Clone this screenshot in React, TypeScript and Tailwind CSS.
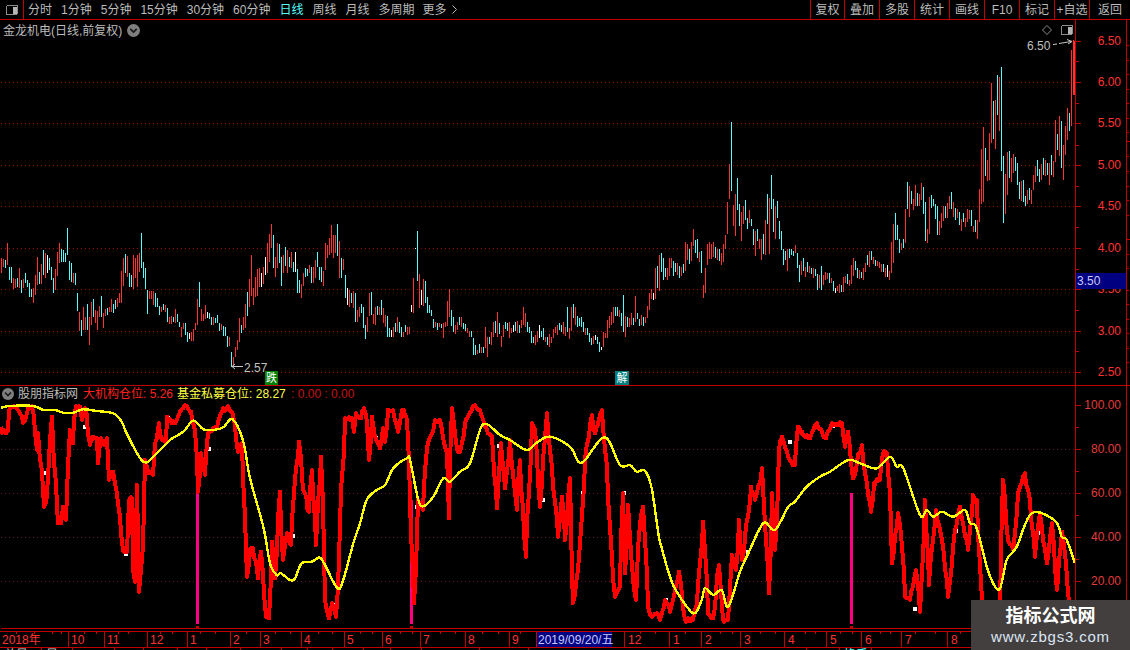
import React from "react";

const RED = "#ff3232";
const CYAN = "#54fcfc";
const LINE = "#c00000";

// candle traces: "top-bottom colour" in zoomed (x3) pixels
function sec(x0: number, y0: number, s: string) {
  return s
    .trim()
    .split(/\s+/)
    .map((t, i) => {
      const m = t.match(/(\d+)-(\d+)([rcw])/)!;
      return { x: x0 + i * 2, t: Math.round(y0 + +m[1] / 3), b: Math.round(y0 + +m[2] / 3), c: m[3] };
    });
}

const bars = [
  ...sec(1, 210, `143-188r 148-172r 150-175c 100-165r 172-210c 172-218c 205-238r 208-235r 205-232c 175-235r 210-248c 208-235r 190-220c 210-230c 220-262c 238-262c 235-278r 195-255r 140-225r 185-222c 162-222r 120-195c 130-205r 135-190w 145-180c 170-210c 205-248c 178-240r 125-198r 100-158r 118-155c 120-155c 130-155c 55-135c 153-210c 160-215c 190-220r 190-225c 250-303c 305-362r 330-378c 292-360r 320-360r 282-360c 320-405r 277-345r 268-320c 300-340r 303-360r 288-322r 258-320c 310-353r 296-318r 295-315c 290-305r 267-305r 283-310c 270-298c 265-290r 250-280r 183-278r 145-228r 132-190c 138-200r 190-232c 195-232c 135-238r 145-205r 135-232r 130-185r 70-175c 155-205c 175-237c 240-312c 243-267r 243-268r 243-285r 250-290c 265-290c 288-315c 290-305r 282-300c 285-305r 295-335c 320-342r 318-342r 322-336c 298-340r 312-336c 336-352c 350-380r 340-358r 340-375c 365-395c 368-388w 365-392r 358-392r 340-360r 268-345r 217-290c 298-332r 312-332r 285-328r 305-325w 308-328c 322-345c 322-345r 325-340c 315-340c 340-362c 342-360r 348-378c 352-378c 378-410c 382-408r 425-470c 440-470r 410-442r 390-420r 325-395r 345-368c 320-360r 282-355r 245-317c 207-290r 135-258r 235-285r 200-262r 178-258r 175-232r 190-232w 172-222r 140-195w 100-190r 72-155r`),
  ...sec(271, 210, `42-115r 75-175c 140-200r 100-175r 102-160c 140-228c 135-190r 112-168c 120-188r 140-172c 125-175r 155-185c 127-187w 178-248c 210-248c 222-264r 190-228r 175-200c 178-198c 165-190r 172-220c 170-218r 150-205r 125-170c 172-210c 170-215c 182-228r 100-180r 105-145r 85-135r 45-130r 75-145r 75-130r 42-138c 92-205r 145-205c 148-180r 195-265c 235-285w 240-290r 250-280c 242-295r 250-335c 300-335r 290-320r 282-308c 290-355c 345-388c 320-365r 250-318r 245-315c 312-342r 290-345r 288-315c 292-315r 270-315c 295-340r 315-350r 318-380c 355-380c 360-380w 350-380r 340-365c 320-365r 335-368c 352-380c 365-382r 345-365c 350-375r 352-372r 285-305w 205-308r 113-118w 63-212c 192-293r 240-285w 208-288r 213-278c 262-308c 285-310c 300-318c 328-355c 335-352r 338-360c 340-352r 342-355c 340-384r 335-350r 273-348r 238-322r 300-348c 322-365c 345-372r 335-360r 322-345c 322-352r 340-358c 343-362c 355-368r 362-382r 364-380c 385-435c 405-435c 420-432r 402-428c 412-430r 410-428c 350-415r 380-440r 382-402c 365-405r 335-380r 332-368c 305-380r 340-372c 378-412r 345-380r 335-358c 338-362c 335-385r 355-368r 345-365w 335-362c 333-368r 345-368c 330-355r 292-345r 308-352r 335-365c 350-368c 362-398c 382-400c 375-405r 362-395r 345-385w 362-382c 355-390c 380-395r 382-405c 372-410r 382-400r 358-385r 350-370r 345-375r 340-360c 345-365c 335-372r 350-378r 292-365c 355-388r 292-362r 282-325c 292-345r 318-352c 325-348c 320-350c 335-365c 355-375r 355-375c 370-395c 385-405c 378-402r 375-390w 380-402c 395-425c 410-420w 365-410r 368-385r 330-385r 318-355r 305-345r 292-340r 292-318c 292-318c 300-322r 310-348c 255-365c 318-380r 322-350c 325-352r 310-345r 325-345c 258-335r 310-328c 328-348c 315-345r 322-348c 322-340r 288-325r 250-300r`),
  ...sec(651, 60, `688-718r 700-720w 625-718r 618-685c 585-692r 580-635c 595-660c 625-650c 625-660r 595-648r 595-625r 602-648c 608-635c 610-645r 618-655c 622-648r 612-638c 546-632r 552-600r 567-612c 546-602r 507-558r 540-580c 537-595c 576-606r 572-640c 675-715r 624-698r 552-615r 546-598r 552-598r 546-590r 562-595c 566-600r 568-604c 578-615r 552-605r 525-568r 426-522r 312-418r 186-393c 435-498r 402-528r 354-450c 432-498c 456-543r 438-492r 420-480c 474-507c 450-490r 477-498c 507-555c 513-588r 507-543c 537-568r 537-600r 522-582c 480-585r 402-492c 414-582r 345-447c 417-516c 438-537r 423-474c 483-537c 513-570c 567-615c 573-600c 567-633r 567-594c 567-585c 573-588c 555-580r 580-624c 615-666c 603-645r 594-633c 620-651r 606-636c 618-640r 624-642c 624-654r 628-648c 642-690c 645-684r 618-690c 645-675r 636-660r 640-657r 640-669c 654-670r 663-693c 684-698w 678-692r 672-699r 675-696c 650-696r 648-670r 642-672c 660-678r 615-672r 595-648r 603-630c 624-654c 630-657r 636-654c 624-660r 609-636r 585-615c 573-621r 573-600c 590-612r 600-618c 603-618r 606-624r 612-636r 612-636c 624-651r 615-651w 632-660r 546-640r 492-609r 459-540c 495-540c 537-579c 549-570r 537-564c 447-549r 366-447c 378-471r 393-432c 417-450r 375-438r 399-438c 402-438r 369-420r 381-462c 426-543c 507-549r 411-522r 405-444c 417-438c 432-477c 438-525c 483-525r 459-504r 438-483r 438-474c 429-474r 408-447r 396-447c 426-471r 444-480c 447-474r 456-495c 477-513r 459-486c 474-501r 447-486r 450-477r 450-498c 498-516r 480-516c 480-537r 387-486r 267-432r 201-426r 264-348c 300-363r 219-360r 69-249r 123-237c 120-267r 45-165c 50-213r`),
  ...sec(1001, 30, `112-423c 378-578c 432-552r 366-495r 363-444c 384-456r 372-429r 381-423c 400-465c 456-507c 453-513r 450-516c 498-528c 480-522r 474-510c 480-522r 435-480r 408-456r 390-438c 417-456c 402-450r 384-435c 390-438r 399-435c 399-465r 375-435c 393-441r 270-396r 312-360c 258-378r 273-414c 345-450r 288-375r 234-330r 250-303c 60-288r 30-192r`),
];

function barPath(c: string) {
  return bars
    .filter((b) => b.c === c)
    .map((b) => `M${b.x + 0.5} ${b.t}V${b.b}`)
    .join("");
}

function pts(x0: number, y0: number, s: string) {
  return s
    .trim()
    .split(/\s+/)
    .map((p) => {
      const [a, b] = p.split(",").map(Number);
      return [x0 + a / 3, y0 + b / 3] as [number, number];
    });
}

const redRaw = [
  ...pts(0, 400, `3,80 6,98 12,90 18,100 24,92 27,30 33,22 42,18 50,25 60,40 70,68 78,50 85,25 95,18 102,50 105,95 110,150 115,100 120,180 127,215 132,320 140,285 147,180 155,50 160,130 167,250 175,370 182,370 190,320 197,360 205,200 210,90 218,130 222,60 228,18 240,20 245,60 255,25 262,60 270,135 280,110 290,115 295,190 302,115 312,135 320,115 326,240 340,215 350,280 360,350 368,450 380,455 388,300 395,295 400,510 405,545 412,255 418,575 428,440 435,180 448,220 458,225 466,130 478,70 485,120 497,125 500,50 515,70 525,70 540,35 560,18 572,35 585,90 595,275 603,160 615,225 625,100 640,85 650,85 665,35 685,18 700,45 715,155 727,130 735,350 742,530 750,450 758,445 775,535 783,455 797,650 808,655`),
  ...pts(270, 400, `6,425 15,535 30,275 40,480 50,400 62,435 72,280 88,125 100,270 118,335 125,210 137,435 153,170 165,600 178,655 187,610 197,650 210,380 225,55 245,55 252,95 258,40 272,55 283,25 292,70 298,180 307,50 315,110 330,145 340,85 345,125 355,30 368,30 385,95 395,30 412,60 420,300 433,610 445,300 458,330 470,145 495,60 510,60 530,160 537,355 547,25 560,145 570,155 585,70 610,18 630,30 645,80 665,110 672,215 682,325 692,130 705,265 720,120 740,330 750,180 767,470 785,70 795,90 810,320 830,40 835,90 850,260 865,410 875,290 885,420 900,235 907,520 910,610 925,510 945,185 965,45 975,100 995,30 1010,200 1025,470 1035,590 1050,560 1060,280 1065,520 1075,315 1085,500 1097,600 1110,375 1120,320 1133,620 1145,650 1160,640 1170,660`),
  ...pts(660, 400, `15,600 30,635 45,570 58,515 75,660 100,660 110,610 130,365 145,640 160,655 178,495 188,660 205,660 215,465 227,510 237,360 245,480 265,350 272,260 285,300 295,260 307,205 318,420 327,580 337,280 345,450 358,150 365,110 385,170 405,195 413,80 430,105 450,115 470,70 497,115 515,70 545,70 555,140 565,95 580,235 605,135 620,250 632,335 642,250 660,240 668,160 680,160 690,280 697,490 715,340 727,440 735,590 750,600 758,560 768,510 781,635 795,300 807,555 828,330 845,420 865,590 885,390 900,320 925,450 940,285 950,300 965,600 975,640 1000,660 1020,640 1030,240 1045,420 1060,450 1075,280 1095,220 1110,300 1125,470 1140,340 1160,490 1175,370 1190,570 1207,395 1225,580 1232,640`),
];

// the traced line has a fine tremble between its traced points
let seed = 12345;
function rnd() {
  seed = (seed * 1103515245 + 12345) & 0x7fffffff;
  return seed / 0x7fffffff;
}
function tremble(p: [number, number][]) {
  const out: string[] = [];
  for (let i = 0; i < p.length - 1; i++) {
    const [x1, y1] = p[i];
    const [x2, y2] = p[i + 1];
    const n = Math.max(1, Math.round((x2 - x1) / 1.5));
    for (let k = 0; k < n; k++) {
      const f = k / n;
      const j = k === 0 ? 0 : (rnd() - 0.5) * 5;
      out.push(`${Math.round(x1 + (x2 - x1) * f + (k === 0 ? 0 : (rnd() - 0.5)))},${(y1 + (y2 - y1) * f + j).toFixed(1)}`);
    }
  }
  const l = p[p.length - 1];
  out.push(`${l[0]},${l[1]}`);
  return out.join(" ");
}
const redLine = tremble(redRaw);

const yellowPts = [
  ...pts(0, 400, `3,23 30,18 100,18 130,30 165,30 190,38 220,38 250,28 290,33 340,40 365,65 380,100 430,185 470,160 510,120 550,95 580,62 610,88 640,90 670,82 698,58 730,125 750,235 790,380 810,490`),
  ...pts(270, 400, `20,525 33,520 60,540 75,535 95,490 125,485 135,480 155,478 200,562 218,545 250,430 270,370 290,300 320,270 345,255 370,205 410,175 420,180 445,300 462,318 490,290 520,235 540,245 570,215 600,190 630,90 650,72 690,105 720,120 770,150 800,128 840,110 900,140 925,185 945,180 1005,112 1050,195 1080,195 1100,215 1125,212 1145,265 1165,400`),
  ...pts(660, 400, `0,425 30,530 50,575 100,640 125,600 135,565 160,585 185,570 205,620 240,515 265,460 310,370 345,390 385,320 405,305 440,260 480,230 510,215 565,180 600,190 650,205 690,170 710,200 730,205 780,345 800,330 820,350 845,335 880,350 915,330 930,370 950,385 985,515 1018,568 1040,480 1070,440 1115,340 1185,362 1205,410 1220,420 1245,490`),
];

// a smooth curve through the traced points
function smooth(p: [number, number][]) {
  let d = `M${p[0][0].toFixed(1)} ${p[0][1].toFixed(1)}`;
  for (let i = 0; i < p.length - 1; i++) {
    const a = p[Math.max(0, i - 1)];
    const b = p[i];
    const c = p[i + 1];
    const e = p[Math.min(p.length - 1, i + 2)];
    const c1x = b[0] + (c[0] - a[0]) / 6;
    const c1y = b[1] + (c[1] - a[1]) / 6;
    const c2x = c[0] - (e[0] - b[0]) / 6;
    const c2y = c[1] - (e[1] - b[1]) / 6;
    d += `C${c1x.toFixed(1)} ${c1y.toFixed(1)} ${c2x.toFixed(1)} ${c2y.toFixed(1)} ${c[0].toFixed(1)} ${c[1].toFixed(1)}`;
  }
  return d;
}
const yellowLine = smooth(yellowPts);

const specks = [
  ...pts(0, 400, `502,50 252,78 130,215 625,145 375,458 748,452`),
  ...pts(270, 400, `315,110 65,405 187,612 437,317 565,140 685,135 817,297 937,275 1060,275 1185,598`),
  ...pts(660, 400, `15,598 140,610 262,452 388,122 515,75 640,265 885,390 1130,395 763,625`),
];

const priceLevels: [string, number][] = [
  ["6.50", 41],
  ["6.00", 82],
  ["5.50", 123],
  ["5.00", 165],
  ["4.50", 206],
  ["4.00", 248],
  ["3.50", 289],
  ["3.00", 331],
  ["2.50", 372],
];
const indLevels: [string, number][] = [
  ["100.00", 405],
  ["80.00", 449],
  ["60.00", 493],
  ["40.00", 537],
  ["20.00", 581],
];

const timeTicks = [16, 34, 52, 61, 84, 96, 118, 128, 160, 172, 200, 215, 246, 275, 290, 318, 332, 360, 372, 400, 412, 440, 455, 482, 498, 520, 640, 655, 685, 720, 732, 760, 775, 805, 815, 840, 852, 880, 890, 915, 935, 960];

const leftTabs = ["分时", "1分钟", "5分钟", "15分钟", "30分钟", "60分钟", "日线", "周线", "月线", "多周期"];
const rightTabs: [string, string][] = [
  ["复权", "w-[34px]"],
  ["叠加", "w-[35px]"],
  ["多股", "w-[35px]"],
  ["统计", "w-[35px]"],
  ["画线", "w-[35px]"],
  ["F10", "w-[35px]"],
  ["标记", "w-[35px]"],
  ["+自选", "w-[35px]"],
  ["返回", "w-[41px]"],
];
const timeCells: [string, string][] = [
  ["2018年", "w-[69px]"],
  ["10", "w-[36px]"],
  ["11", "w-[43px]"],
  ["12", "w-[40px]"],
  ["1", "w-[43px]"],
  ["2", "w-[30px]"],
  ["3", "w-[41px]"],
  ["4", "w-[43px]"],
  ["5", "w-[38px]"],
  ["6", "w-[38px]"],
  ["7", "w-[45px]"],
  ["8", "w-[44px]"],
  ["9", "w-[27px]"],
];
const timeCells2: [string, string][] = [
  ["", "w-[13px]"],
  ["12", "w-[45px]"],
  ["1", "w-[32px]"],
  ["2", "w-[39px]"],
  ["3", "w-[44px]"],
  ["4", "w-[42px]"],
  ["5", "w-[35px]"],
  ["6", "w-[40px]"],
  ["7", "w-[46px]"],
  ["8", "grow"],
];
const statusCells: [string, string][] = [
  ["总量", "w-[42px] text-[#d0d0d0]"],
  ["量", "w-[31px] text-[#d0d0d0]"],
  ["", "w-[42px]"],
  ["", "w-[29px]"],
  ["", "w-[34px]"],
  ["", "w-[29px]"],
  ["", "w-[34px]"],
  ["", "w-[41px]"],
  ["", "w-[26px]"],
  ["", "w-[25px]"],
  ["", "w-[31px]"],
  ["", "w-[27px]"],
  ["", "w-[31px]"],
  ["", "w-[58px]"],
  ["", "w-[49px]"],
  ["", "w-[278px]"],
  ["", "w-[33px]"],
  ["换手", "w-[32px] text-[#54fcfc]"],
];

function Chevron({ className }: { className: string }) {
  return (
    <svg viewBox="0 0 12 12" className={className}>
      <circle cx="6" cy="6" r="6" fill="#7f7f7f" />
      <path d="M3 4.5 L6 7.5 L9 4.5" fill="none" stroke="#1a1a1a" strokeWidth="1.6" />
    </svg>
  );
}

function PanelIcon({ className }: { className: string }) {
  return (
    <svg viewBox="0 0 12 10" className={className} shapeRendering="crispEdges">
      <rect x="0.5" y="0.5" width="11" height="9" rx="1.5" fill="none" stroke="#8c8c8c" />
      <rect x="7" y="1.5" width="3.5" height="7" fill="#b4b4b4" />
    </svg>
  );
}

export default function App() {
  return (
    <div className="relative flex h-[650px] w-[1130px] flex-col overflow-hidden bg-black font-['Liberation_Sans','Noto_Sans_CJK_SC',sans-serif] text-[12px] leading-none text-[#bcbcbc]">
      {/* toolbar */}
      <div className="flex h-[20px] items-stretch justify-between border-b border-[#c00000]">
        <div className="flex items-center">
          <div className="flex h-full w-[24px] items-center justify-center border-r border-[#c00000]">
            <PanelIcon className="h-[10px] w-[12px]" />
          </div>
          <div className="ml-[4px] flex items-center gap-[9px]">
            {leftTabs.map((t) => (
              <span key={t} className={t === "日线" ? "text-[#54fcfc]" : ""}>
                {t}
              </span>
            ))}
            <span className="ml-[-1px] flex items-center gap-[5px]">
              更多
              <svg viewBox="0 0 5 9" className="h-[9px] w-[5px]">
                <path d="M0.5 0.5 L4.5 4.5 L0.5 8.5" fill="none" stroke="#bcbcbc" />
              </svg>
            </span>
          </div>
        </div>
        <div className="flex">
          {rightTabs.map(([t, w]) => (
            <div key={t} className={`flex items-center justify-center border-l border-[#c00000] ${w}`}>
              {t}
            </div>
          ))}
        </div>
      </div>

      {/* price panel */}
      <div className="relative h-[366px] border-b border-[#c00000]">
        <svg viewBox="0 20 1130 365" className="block h-[365px] w-[1130px]" fontSize="12">
          <g shapeRendering="crispEdges">
            {priceLevels.slice(1).map(([l, y]) => (
              <line key={l} x1="1" x2="1075" y1={y + 0.5} y2={y + 0.5} stroke="#9a0000" strokeDasharray="1 3" />
            ))}
            <path d={barPath("r")} stroke={RED} fill="none" />
            <path d={barPath("c")} stroke={CYAN} fill="none" />
            <path d={barPath("w")} stroke="#ffffff" fill="none" />
            <rect x="1073" y="41" width="2" height="54" fill={RED} />
            <rect x="1075" y="20" width="1" height="365" fill={LINE} />
            <rect x="1126" y="20" width="1" height="365" fill={LINE} />
            {priceLevels.map(([l, y]) => (
              <rect key={l} x="1076" y={y} width="5" height="1" fill={LINE} />
            ))}
            {[61, 103, 145, 186, 227, 269, 310, 351].map((y) => (
              <rect key={y} x="1076" y={y} width="3" height="1" fill={LINE} />
            ))}
            {[45, 60, 74, 89, 103, 118, 132, 141, 156, 171, 186, 200, 215, 239, 254, 268, 290, 304, 319, 333, 348, 362].map((y) => (
              <rect key={y} x="1127" y={y} width={y === 141 || y === 239 ? 3 : 2} height="1" fill={LINE} />
            ))}
          </g>
          {priceLevels.map(([l, y]) => (
            <text key={l} x="1121" y={y + 4} textAnchor="end" fill={RED}>
              {l}
            </text>
          ))}
          <text x="1027" y="50" fill="#c0c0c0">6.50</text>
          <path d="M1053 44.5 L1057 44 M1059 43.5 L1071 41.5 M1067 39.5 L1072 41.5 L1068 44" stroke="#c8c8c8" fill="none" />
          <text x="244" y="372" fill="#c0c0c0">2.57</text>
          <path d="M232 366.5 H243 M232 366.5 L235 364 M232 366.5 L235 369" stroke="#c8c8c8" fill="none" />
        </svg>

        {/* overlays on the chart */}
        <div className="absolute left-[3px] top-[4px] flex items-center gap-[5px]">
          <span>金龙机电(日线,前复权)</span>
          <Chevron className="h-[13px] w-[13px]" />
        </div>
        <svg viewBox="0 0 10 10" className="absolute left-[1042px] top-[5px] h-[10px] w-[10px]">
          <path d="M5 0.5 L9.5 5 L5 9.5 L0.5 5 Z" fill="none" stroke="#8c8c8c" />
        </svg>
        <PanelIcon className="absolute left-[1061px] top-[5px] h-[10px] w-[12px]" />
        <div className="absolute left-[1076px] top-[253px] flex h-[16px] w-[50px] items-center bg-[#000080] pl-[1px] text-[#c8c8ff]">
          3.50
        </div>
        <div className="absolute left-[265px] top-[351px] flex h-[14px] w-[13px] items-center justify-center bg-[#008000] text-[11px] text-white">
          跌
        </div>
        <div className="absolute left-[615px] top-[351px] flex h-[14px] w-[14px] items-center justify-center bg-[#008080] text-[11px] text-white">
          解
        </div>
      </div>

      {/* indicator panel */}
      <div className="relative h-[245px]">
        <svg viewBox="0 386 1130 245" className="block h-[245px] w-[1130px]" fontSize="12">
          <g shapeRendering="crispEdges">
            {indLevels.slice(1).map(([l, y]) => (
              <line key={l} x1="1" x2="1075" y1={y + 0.5} y2={y + 0.5} stroke="#6a1a1a" strokeDasharray="1 3" />
            ))}
            <rect x="196" y="493" width="3" height="131" fill="#ff0080" />
            <rect x="410" y="500" width="3" height="124" fill="#ff0080" />
            <rect x="850" y="493" width="3" height="131" fill="#ff0080" />
            {specks.map(([x, y], i) => (
              <rect key={i} x={Math.round(x) - 1} y={Math.round(y) - 1} width="4" height="4" fill="#ffffff" />
            ))}
            <polyline points={redLine} fill="none" stroke="#ff0000" strokeWidth="4" strokeLinejoin="round" />
            <path d={yellowLine} fill="none" stroke="#ffff00" strokeWidth="2.4" strokeLinejoin="round" />
            <path d="M196 626h3v2h-3zM410 626h3v2h-3zM850 626h3v2h-3z" fill={LINE} />
            <rect x="1" y="628" width="1075" height="1" fill={LINE} />
            <rect x="1075" y="386" width="1" height="245" fill={LINE} />
            <rect x="1126" y="386" width="1" height="245" fill={LINE} />
            {indLevels.map(([l, y]) => (
              <rect key={l} x="1076" y={y} width="5" height="1" fill={LINE} />
            ))}
            {[427, 471, 515, 559, 603].map((y) => (
              <rect key={y} x="1076" y={y} width="3" height="1" fill={LINE} />
            ))}
          </g>
          {indLevels.map(([l, y]) => (
            <text key={l} x="1121" y={y + 4} textAnchor="end" fill="#e03c3c">
              {l}
            </text>
          ))}
        </svg>
        <div className="absolute left-[2px] top-[2px] flex items-center whitespace-pre">
          <Chevron className="mr-[4px] h-[12px] w-[12px]" />
          <span className="mr-[5px]">股朋指标网</span>
          <span className="text-[#ff2020]">大机构仓位: 5.26</span>
          <span className="ml-[4px] text-[#ffff40]">基金私募仓位: 28.27</span>
          <span className="ml-[2px] text-[#c81414]"> : 0.00 : 0.00</span>
        </div>
      </div>

      {/* time axis */}
      <div className="relative flex h-[17px] border-y border-[#c00000] text-[#ff3232]">
        {timeCells.map(([t, w], i) => (
          <div key={i} className={`flex h-full items-center border-r border-[#c00000] pl-[2px] ${w}`}>
            {t}
          </div>
        ))}
        <div className="flex h-full w-[75px] items-center whitespace-nowrap bg-[#000080] pl-[1px] text-[#c8c8ff]">
          2019/09/20/五
        </div>
        {timeCells2.map(([t, w], i) => (
          <div key={i} className={`flex h-full items-center border-r border-[#c00000] pl-[3px] ${w}`}>
            {t}
          </div>
        ))}
        <svg viewBox="0 0 1130 2" className="absolute left-0 top-0 h-[2px] w-[1130px]" shapeRendering="crispEdges">
          {timeTicks.map((x) => (
            <rect key={x} x={x} y="0" width="1" height="2" fill="#c00000" />
          ))}
        </svg>
      </div>

      {/* cut-off status row */}
      <div className="flex h-[2px] grow overflow-hidden">
        {statusCells.map(([t, w], i) => (
          <div key={i} className={`h-[12px] shrink-0 border-r border-[#c00000] pl-[4px] pt-[1px] ${w}`}>
            {t}
          </div>
        ))}
      </div>

      {/* watermark */}
      <div className="absolute left-[971px] top-[600px] flex h-[50px] w-[159px] flex-col items-center bg-[#433f3f] pt-[5px] text-white">
        <span className="text-[18px] font-bold leading-[22px]">指标公式网</span>
        <span className="mt-[1px] text-[15px] leading-[18px] tracking-[0.8px] text-[#dce6f4]">www.zbgs3.com</span>
      </div>
    </div>
  );
}
